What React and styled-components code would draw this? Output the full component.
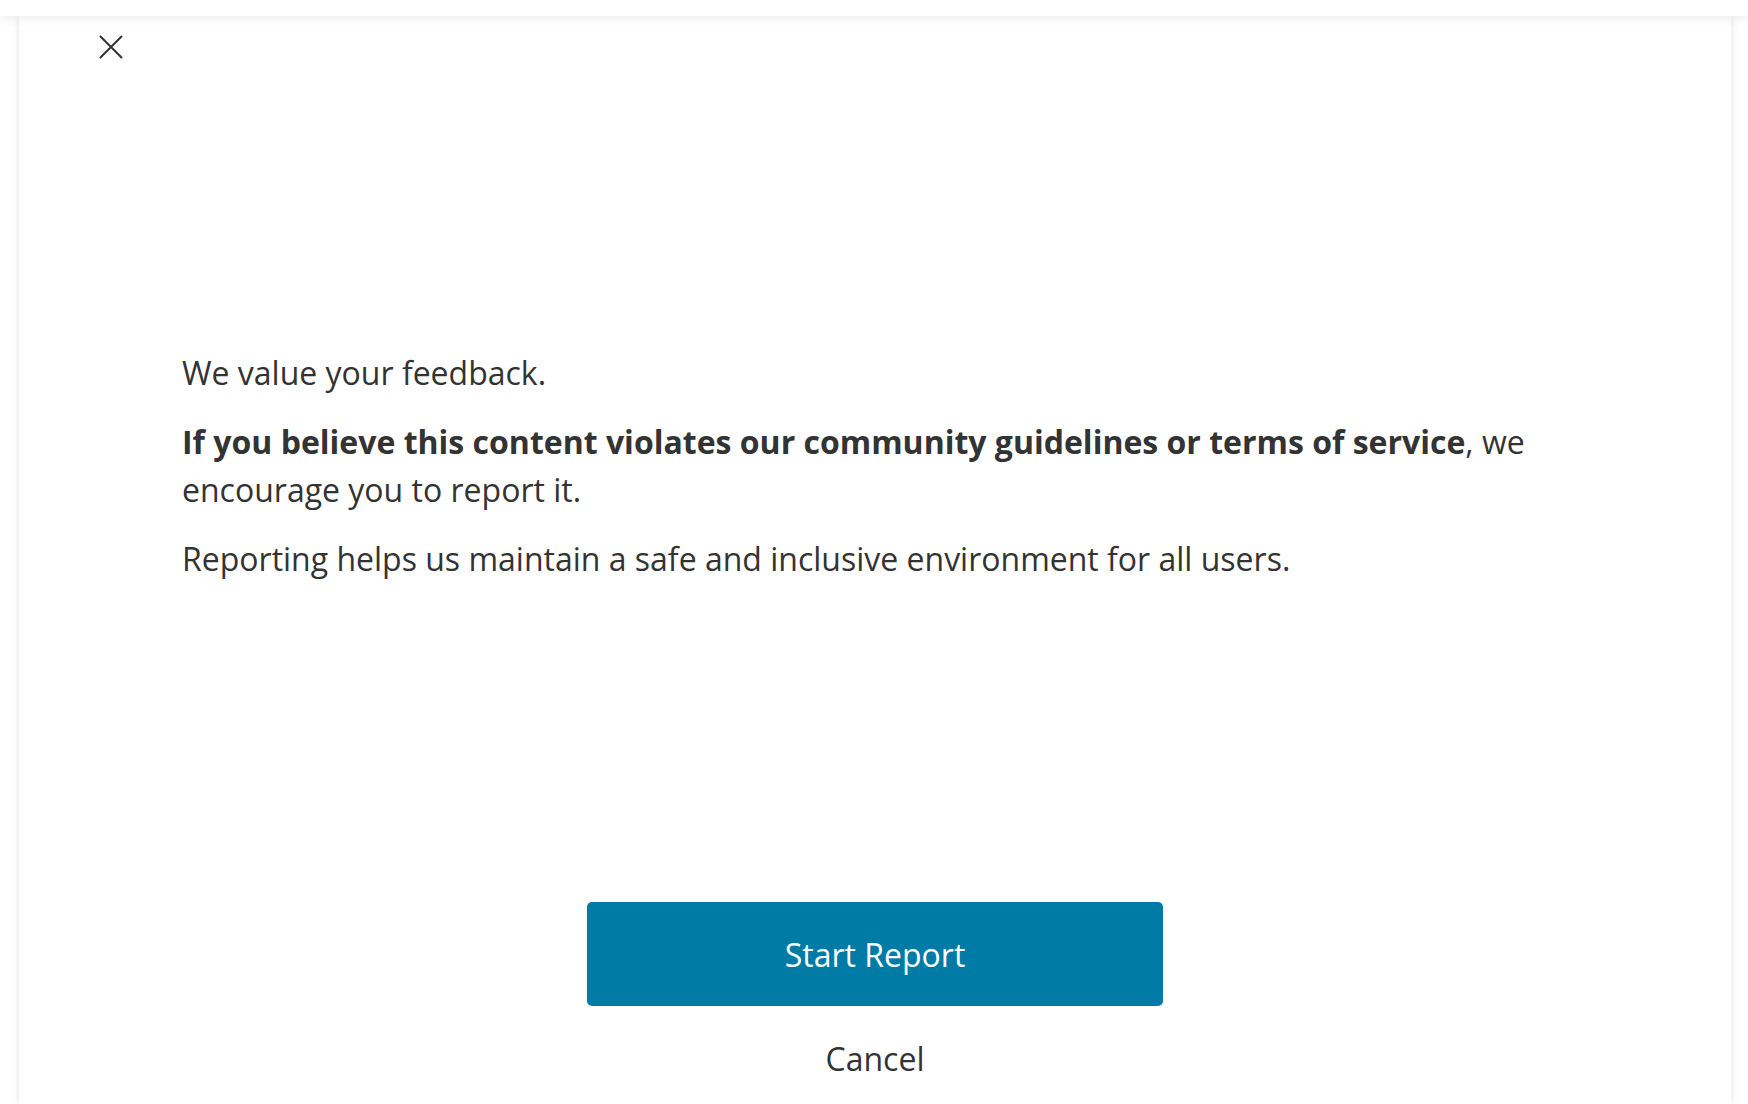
import React from "react";
import styled, { createGlobalStyle } from "styled-components";

const GlobalStyle = createGlobalStyle`
  * {
    box-sizing: border-box;
  }
  html,
  body {
    margin: 0;
    padding: 0;
    background-color: white;
    font-family: "Open Sans", "Noto Sans", sans-serif;
    color: #333;
    overflow: hidden;
  }
`;

const App = () => {
  return (
    <>
      <GlobalStyle />
      <StPage>
        <StTopBar />
        <StPanel>
          <StHeaderDiv>
            <StCloseButton aria-label="Close">
              <svg width="24" height="24" viewBox="0 0 24 24" fill="none">
                <path
                  d="M1.5 1.5L22.5 22.5M22.5 1.5L1.5 22.5"
                  stroke="#333"
                  strokeWidth="2"
                  strokeLinecap="round"
                />
              </svg>
            </StCloseButton>
          </StHeaderDiv>

          <StMessageDiv>
            <StMessageP>We value your feedback.</StMessageP>
            <StMessageP>
              <strong>
                If you believe this content violates our community guidelines
                or terms of service
              </strong>
              , we encourage you to report it.
            </StMessageP>
            <StMessageP>
              Reporting helps us maintain a safe and inclusive environment for
              all users.
            </StMessageP>
          </StMessageDiv>

          <StActionsDiv>
            <StPrimaryButton>Start Report</StPrimaryButton>
            <StTextButton>Cancel</StTextButton>
          </StActionsDiv>
        </StPanel>
      </StPage>
    </>
  );
};

const StPage = styled.div`
  width: 100%;
  height: 100vh;
  display: flex;
  flex-direction: column;
  background-color: white;
`;

const StTopBar = styled.div`
  height: 16px;
  flex-shrink: 0;
  background-color: white;
  position: relative;
  z-index: 2;
  box-shadow: 0 3px 10px rgba(0, 0, 0, 0.07);
`;

const StPanel = styled.div`
  flex: 1;
  margin: 0 17px 0 19px;
  background-color: white;
  box-shadow: 0 0 7px rgba(0, 0, 0, 0.13);
  display: flex;
  flex-direction: column;
`;

const StHeaderDiv = styled.div`
  display: flex;
  padding: 19px 0 0 80px;
`;

const StCloseButton = styled.button`
  width: 24px;
  height: 24px;
  padding: 0;
  border: none;
  background: none;
  cursor: pointer;
  display: flex;
  svg {
    display: block;
  }
`;

const StMessageDiv = styled.div`
  margin-top: 290px;
  padding: 0 163px;
  display: flex;
  flex-direction: column;
  gap: 21px;
`;

const StMessageP = styled.p`
  margin: 0;
  font-size: 32px;
  line-height: 48px;
  color: #333;
  strong {
    font-weight: 700;
  }
`;

const StActionsDiv = styled.div`
  margin-top: 319px;
  display: flex;
  flex-direction: column;
  align-items: center;
  gap: 29px;
`;

const StPrimaryButton = styled.button`
  width: 576px;
  height: 104px;
  border: none;
  border-radius: 5px;
  background-color: #007ba6;
  color: white;
  font-family: "Open Sans", "Noto Sans", sans-serif;
  font-size: 32px;
  cursor: pointer;
`;

const StTextButton = styled.button`
  border: none;
  background: none;
  padding: 0;
  font-family: "Open Sans", "Noto Sans", sans-serif;
  font-size: 32px;
  line-height: 48px;
  color: #333;
  cursor: pointer;
`;

export default App;
